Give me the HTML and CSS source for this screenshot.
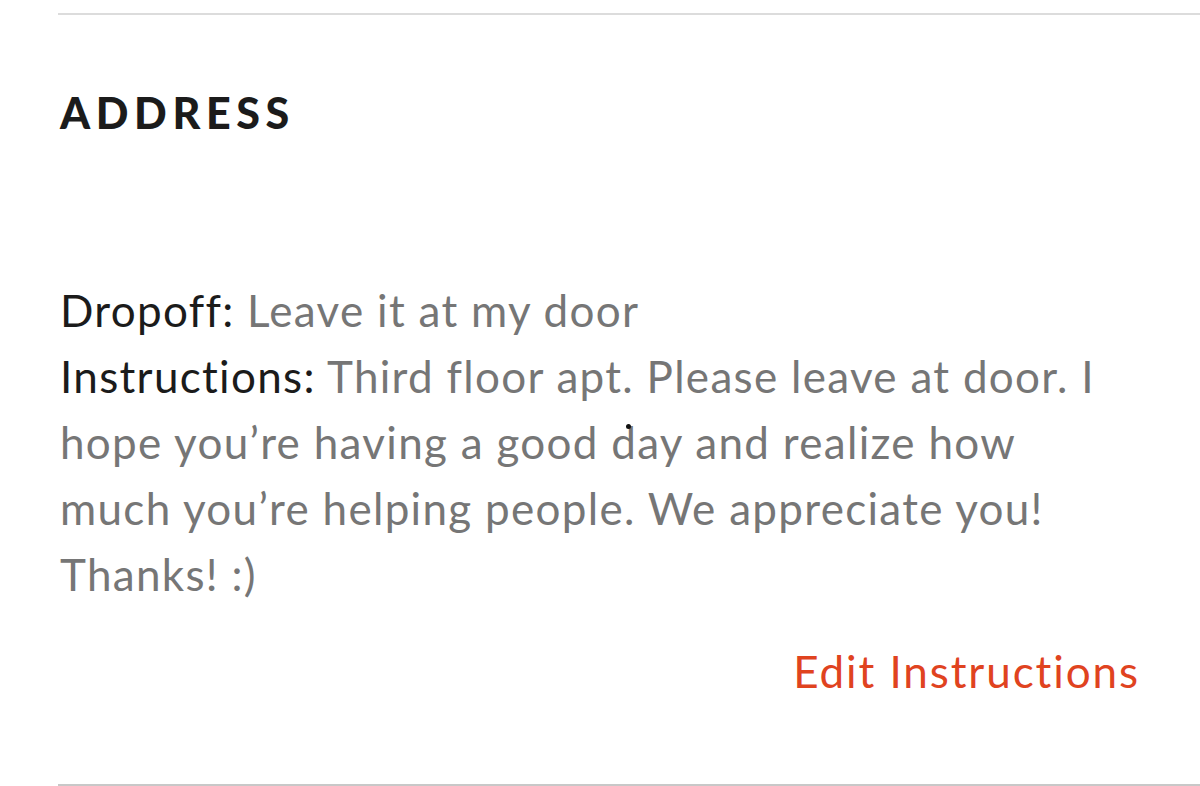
FILE: index.html
```html
<!DOCTYPE html>
<html>
<head>
<meta charset="utf-8">
<link rel="stylesheet" href="styles.css">
</head>
<body>
<section class="address">
  <h2 class="title">ADDRESS</h2>
  <div class="details">
    <p class="row"><span class="label">Dropoff:</span> <span class="value">Leave it at my door</span></p>
    <p class="row"><span class="label">Instructions:</span> <span class="value">Third floor apt. Please leave at door. I hope you’re having a good day and realize how much you’re helping people. We appreciate you! Thanks! :)</span></p>
  </div>
  <div class="actions"><a class="edit">Edit Instructions</a></div>
  <span class="speck"></span>
</section>
</body>
</html>
```
FILE: styles.css
```css
html, body {
  margin: 0;
  padding: 0;
  background: #ffffff;
}
body {
  width: 1200px;
  height: 786px;
  overflow: hidden;
  font-family: "Lato", "Noto Sans", sans-serif;
}
.address {
  position: relative;
  margin-top: 13px;
  margin-left: 58px;
  border-top: 2px solid #dcdcdc;
  border-bottom: 2px solid #c8c8c8;
  padding: 0 60px 0 2px;
  height: 773px;
  box-sizing: border-box;
  display: flex;
  flex-direction: column;
}
.title {
  margin: 74px 0 0 0;
  font-size: 43px;
  font-weight: 900;
  letter-spacing: 5.6px;
  color: #1b1b1b;
  line-height: 48px;
}
.details {
  margin-top: 140px;
  max-width: 1060px;
  font-size: 44px;
  letter-spacing: 1.3px;
  line-height: 66px;
  color: #767676;
}
.row {
  margin: 0;
}
.label {
  color: #1b1b1b;
}
.value {
  color: #767676;
}
.actions {
  display: flex;
  justify-content: flex-end;
  margin-top: 31px;
}
.edit {
  color: #e0431f;
  font-size: 44px;
  letter-spacing: 1.9px;
  line-height: 66px;
}
.speck {
  position: absolute;
  left: 568px;
  top: 409px;
  width: 5px;
  height: 5px;
  border-radius: 50%;
  background: #111;
}
```
